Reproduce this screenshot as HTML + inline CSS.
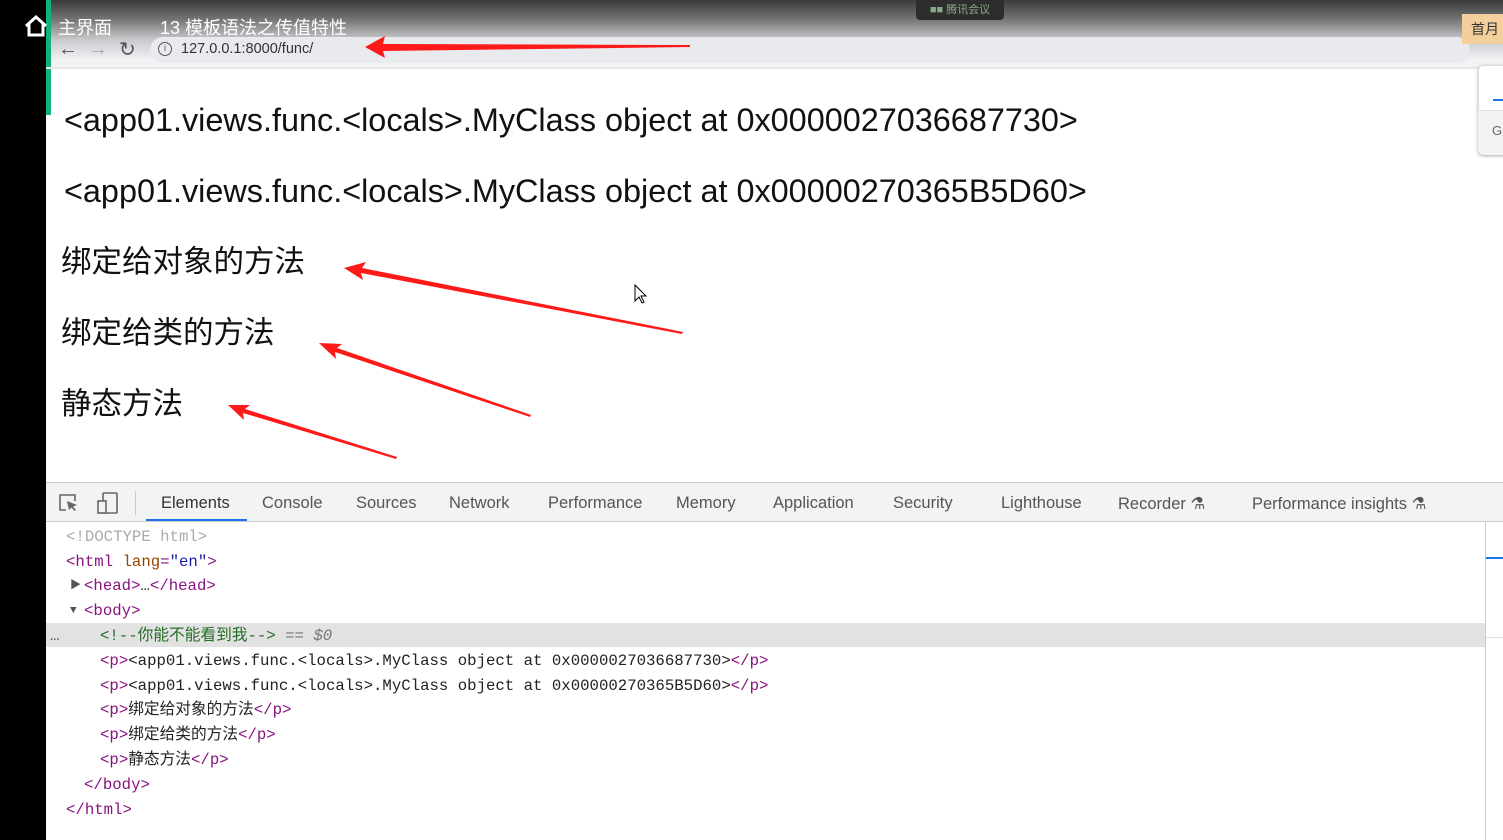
<!DOCTYPE html>
<html><head><meta charset="utf-8"><style>
*{margin:0;padding:0;box-sizing:border-box}
body{width:1503px;height:840px;overflow:hidden;position:relative;background:#fff;font-family:"Liberation Sans","Noto Sans CJK SC",sans-serif}
.abs{position:absolute}
.top{left:0;top:0;width:1503px;height:68px;background:linear-gradient(#3a3a3a 0px,#777 20px,#c9cacd 40px,#f1f2f4 60px,#f1f2f4 68px)}
.left{left:0;top:0;width:46px;height:840px;background:#000}
.green{left:46px;top:0;width:5px;height:115px;background:#12b17a}
.pg{font-size:32.4px;color:#111;left:64px;white-space:nowrap;line-height:40px}
.cn{font-size:30.5px;color:#111;left:61px;line-height:40px}
.dt{left:46px;top:482px;width:1457px;height:40px;background:#f1f3f4;border-top:1px solid #ccc;border-bottom:1px solid #ccc}
.tab{position:absolute;top:11px;font-size:16.5px;color:#555}
.code{font-family:"Liberation Mono","Noto Sans CJK SC",monospace;font-size:15.7px;line-height:20px;height:20px;white-space:pre;color:#222;left:66px}
.t{color:#881280}.a{color:#994500}.v{color:#1a1aa6}.g{color:#236e25}
</style></head><body>
<div class="abs top"></div>
<div class="abs left"></div>
<div class="abs green"></div>
<div class="abs" style="left:916px;top:0;width:88px;height:20px;background:#2d2d2d;border-radius:0 0 4px 4px;color:#8a8;font-size:11px;text-align:center;line-height:20px">■■ 腾讯会议</div>
<svg class="abs" style="left:24px;top:15px" width="24" height="22" viewBox="0 0 24 22"><path d="M2 11 L12 2 L22 11 M5 9 V20 H19 V9" fill="none" stroke="#fff" stroke-width="3"/></svg>
<div class="abs" style="left:58px;top:14px;color:#fff;font-size:18px">主界面</div>
<div class="abs" style="left:160px;top:14px;color:#fff;font-size:18px">13 模板语法之传值特性</div>
<div class="abs" style="left:150px;top:37px;width:1320px;height:26px;background:#e9eaed;border-radius:13px"></div>
<div class="abs" style="left:58px;top:38px;color:#555;font-size:20px">←</div>
<div class="abs" style="left:88px;top:38px;color:#aaa;font-size:20px">→</div>
<div class="abs" style="left:119px;top:37px;color:#555;font-size:20px">↻</div>
<div class="abs" style="left:158px;top:42px;width:14px;height:14px;border:1.5px solid #555;border-radius:50%;font-size:9px;text-align:center;line-height:11px;color:#555">i</div>
<div class="abs" style="left:181px;top:41px;color:#333;font-size:14.5px">127.0.0.1:8000/func/</div>
<div class="abs" style="left:1462px;top:14px;width:41px;height:30px;background:#f3cf9b;font-size:14px;line-height:30px;padding-left:9px;color:#333;overflow:hidden;white-space:nowrap">首月</div>
<div class="abs" style="left:46px;top:67px;width:1457px;height:2px;background:#e6e6e6"></div>
<div class="abs" style="left:1478px;top:65px;width:30px;height:90px;background:#fff;border:1px solid #ddd;border-radius:5px;box-shadow:0 1px 3px #aaa"></div>
<div class="abs" style="left:1493px;top:99px;width:12px;height:2px;background:#1a73e8"></div>
<div class="abs" style="left:1478px;top:110px;width:30px;height:45px;background:#f3f3f3;border-top:1px solid #ddd;border-radius:0 0 5px 5px"></div>
<div class="abs" style="left:1492px;top:123px;color:#666;font-size:13px">G</div>

<div class="abs pg" style="top:100px">&lt;app01.views.func.&lt;locals&gt;.MyClass object at 0x0000027036687730&gt;</div>
<div class="abs pg" style="top:171px">&lt;app01.views.func.&lt;locals&gt;.MyClass object at 0x00000270365B5D60&gt;</div>
<div class="abs cn" style="top:242px">绑定给对象的方法</div>
<div class="abs cn" style="top:313px">绑定给类的方法</div>
<div class="abs cn" style="top:384px">静态方法</div>

<svg class="abs" style="left:0;top:0" width="1503" height="482">
<g fill="#ff1a1a">
<polygon points="365,47 385,36 383,44 690,45 690,47 383,51 385,58"/>
<polygon points="344,268 366,262 362,268 683,332 682,334 361,273 363,280"/>
<polygon points="319,343 342,344 337,348 531,415 530,417 335,352 336,359"/>
<polygon points="228,405 250,405 245,409 397,457 396,459 243,413 244,420"/>
</g>
<path d="M635 285 V301 L639 297 L642 303 L644 302 L641 296 L646 296 Z" fill="#fff" stroke="#000" stroke-width="1"/>
</svg>

<div class="abs dt">
<svg class="abs" style="left:12px;top:10px" width="22" height="20" viewBox="0 0 22 20"><path d="M8 17 H2 V2 H17 V8" fill="none" stroke="#666" stroke-width="1.6"/><path d="M9 8 L19 12 L15 13.5 L18 17 L16.5 18 L13.5 14.5 L11 17 Z" fill="#666"/></svg>
<svg class="abs" style="left:50px;top:9px" width="24" height="22" viewBox="0 0 24 22"><rect x="7" y="1" width="14" height="20" rx="1" fill="none" stroke="#666" stroke-width="1.6"/><rect x="2" y="9" width="8" height="12" fill="#f1f3f4" stroke="#666" stroke-width="1.6"/></svg>
<div class="abs" style="left:89px;top:8px;width:1px;height:24px;background:#ccc"></div>
<span class="tab" style="left:115px;color:#333">Elements</span>
<div class="abs" style="left:100px;top:36px;width:101px;height:2px;background:#1a73e8"></div>
<span class="tab" style="left:216px">Console</span>
<span class="tab" style="left:310px">Sources</span>
<span class="tab" style="left:403px">Network</span>
<span class="tab" style="left:502px">Performance</span>
<span class="tab" style="left:630px">Memory</span>
<span class="tab" style="left:727px">Application</span>
<span class="tab" style="left:847px">Security</span>
<span class="tab" style="left:955px">Lighthouse</span>
<span class="tab" style="left:1072px">Recorder ⚗</span>
<span class="tab" style="left:1206px">Performance insights ⚗</span>
</div>
<div class="abs" style="left:1485px;top:522px;width:1px;height:318px;background:#ccc"></div>
<div class="abs" style="left:1486px;top:557px;width:17px;height:2px;background:#1a73e8"></div>
<div class="abs" style="left:1486px;top:637px;width:17px;height:1px;background:#ddd"></div>
<div class="abs" style="left:46px;top:623px;width:1439px;height:24px;background:#e2e2e2"></div>
<div class="abs code" style="top:527px;color:#aaa">&lt;!DOCTYPE html&gt;</div>
<div class="abs code" style="top:552px"><span class="t">&lt;html</span> <span class="a">lang</span><span class="t">=</span><span class="v">"en"</span><span class="t">&gt;</span></div>
<div class="abs code" style="top:576px;left:70px;font-size:11px;color:#555">▶</div>
<div class="abs code" style="top:576px;left:84px"><span class="t">&lt;head&gt;</span>…<span class="t">&lt;/head&gt;</span></div>
<div class="abs code" style="top:601px;left:70px;font-size:11px;color:#555">▼</div>
<div class="abs code" style="top:601px;left:84px"><span class="t">&lt;body&gt;</span></div>
<div class="abs code" style="top:626px;left:50px;color:#555">…</div>
<div class="abs code" style="top:626px;left:100px"><span class="g">&lt;!--你能不能看到我--&gt;</span> <i style="color:#777">== $0</i></div>
<div class="abs code" style="top:651px;left:100px"><span class="t">&lt;p&gt;</span>&lt;app01.views.func.&lt;locals&gt;.MyClass object at 0x0000027036687730&gt;<span class="t">&lt;/p&gt;</span></div>
<div class="abs code" style="top:676px;left:100px"><span class="t">&lt;p&gt;</span>&lt;app01.views.func.&lt;locals&gt;.MyClass object at 0x00000270365B5D60&gt;<span class="t">&lt;/p&gt;</span></div>
<div class="abs code" style="top:700px;left:100px"><span class="t">&lt;p&gt;</span>绑定给对象的方法<span class="t">&lt;/p&gt;</span></div>
<div class="abs code" style="top:725px;left:100px"><span class="t">&lt;p&gt;</span>绑定给类的方法<span class="t">&lt;/p&gt;</span></div>
<div class="abs code" style="top:750px;left:100px"><span class="t">&lt;p&gt;</span>静态方法<span class="t">&lt;/p&gt;</span></div>
<div class="abs code" style="top:775px;left:84px"><span class="t">&lt;/body&gt;</span></div>
<div class="abs code" style="top:800px"><span class="t">&lt;/html&gt;</span></div>
</body></html>
